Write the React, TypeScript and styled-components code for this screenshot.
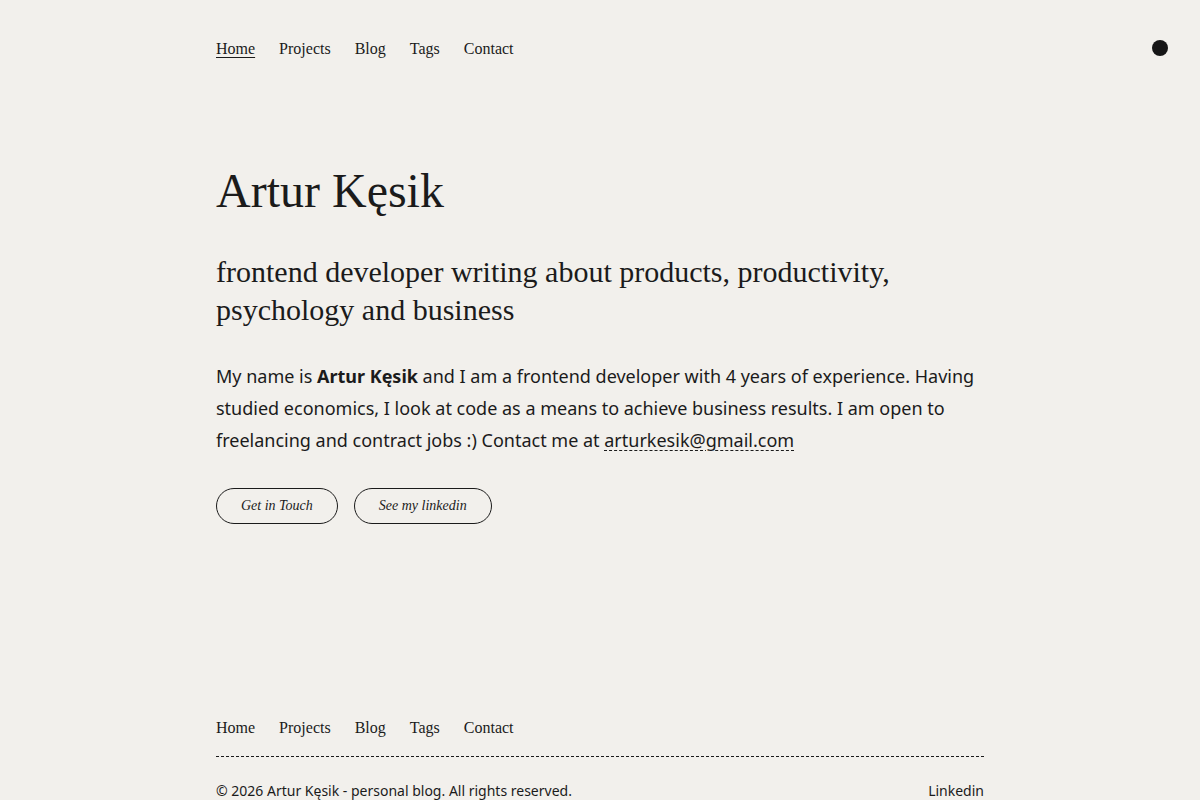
import React from "react";
import styled, { createGlobalStyle } from "styled-components";

const GlobalStyle = createGlobalStyle`
  html, body {
    margin: 0;
    padding: 0;
    background: #f2f0ec;
    color: #1b1b1b;
  }
  * { box-sizing: border-box; }
`;

const Page = styled.div`
  min-height: 800px;
  display: flex;
  flex-direction: column;
`;

const Header = styled.header`
  position: relative;
  padding-top: 37px;
`;

const Container = styled.div`
  width: 768px;
  margin: 0 auto;
`;

const NavList = styled.nav`
  display: flex;
  gap: 24px;
  font-family: "Liberation Serif", "Times New Roman", serif;
  font-size: 16px;
  line-height: 24px;
`;

const NavLink = styled.a<{ $active?: boolean }>`
  color: #1b1b1b;
  text-decoration: ${(p) => (p.$active ? "underline" : "none")};
  text-underline-offset: 3px;
  cursor: pointer;
`;

const ThemeDot = styled.button`
  position: absolute;
  top: 40px;
  right: 32px;
  width: 16px;
  height: 16px;
  border-radius: 50%;
  border: none;
  padding: 0;
  background: #161616;
`;

const Hero = styled.main`
  padding-top: 101px;
`;

const Title = styled.h1`
  margin: 0;
  font-family: "Liberation Serif", "Times New Roman", serif;
  font-weight: 400;
  font-size: 48px;
  line-height: 57.6px;
`;

const Subtitle = styled.h2`
  margin: 33px 0 0;
  font-family: "Liberation Serif", "Times New Roman", serif;
  font-weight: 400;
  font-size: 30px;
  line-height: 38px;
`;

const Intro = styled.p`
  margin: 31px 0 0;
  font-family: "Noto Sans", "Open Sans", sans-serif;
  font-size: 18px;
  line-height: 32px;
  strong { font-weight: 700; }
`;

const Mail = styled.a`
  color: #1b1b1b;
  text-decoration: underline dashed #1b1b1b;
  text-decoration-thickness: 1px;
  text-underline-offset: 3px;
`;

const Actions = styled.div`
  display: flex;
  gap: 16px;
  margin-top: 32px;
`;

const PillButton = styled.a`
  display: inline-flex;
  align-items: center;
  height: 36px;
  padding: 0 24px;
  border: 1px solid #1b1b1b;
  border-radius: 18px;
  font-family: "Liberation Serif", "Times New Roman", serif;
  font-style: italic;
  font-size: 14px;
  color: #1b1b1b;
  text-decoration: none;
`;

const Footer = styled.footer`
  margin-top: 192px;
`;

const Rule = styled.hr`
  margin: 16px 0 0;
  border: none;
  border-top: 1px dashed #1b1b1b;
`;

const FooterBottom = styled.div`
  display: flex;
  justify-content: space-between;
  margin-top: 24px;
  font-family: "Noto Sans", "Open Sans", sans-serif;
  font-size: 14px;
  line-height: 20px;
`;

const FooterLink = styled.a`
  color: #1b1b1b;
  text-decoration: none;
`;

const links = ["Home", "Projects", "Blog", "Tags", "Contact"];

export default function App() {
  return (
    <Page>
      <GlobalStyle />
      <Header>
        <Container>
          <NavList>
            {links.map((l, i) => (
              <NavLink key={l} $active={i === 0}>
                {l}
              </NavLink>
            ))}
          </NavList>
        </Container>
        <ThemeDot aria-label="Toggle theme" />
      </Header>
      <Container>
        <Hero>
          <Title>Artur Kęsik</Title>
          <Subtitle>
            frontend developer writing about products, productivity, psychology and business
          </Subtitle>
          <Intro>
            My name is <strong>Artur Kęsik</strong> and I am a frontend developer with 4 years of
            experience. Having studied economics, I look at code as a means to achieve business
            results. I am open to freelancing and contract jobs :) Contact me at{" "}
            <Mail>arturkesik@gmail.com</Mail>
          </Intro>
          <Actions>
            <PillButton>Get in Touch</PillButton>
            <PillButton>See my linkedin</PillButton>
          </Actions>
        </Hero>
        <Footer>
          <NavList>
            {links.map((l) => (
              <NavLink key={l}>{l}</NavLink>
            ))}
          </NavList>
          <Rule />
          <FooterBottom>
            <span>© 2026 Artur Kęsik - personal blog. All rights reserved.</span>
            <FooterLink>Linkedin</FooterLink>
          </FooterBottom>
        </Footer>
      </Container>
    </Page>
  );
}
